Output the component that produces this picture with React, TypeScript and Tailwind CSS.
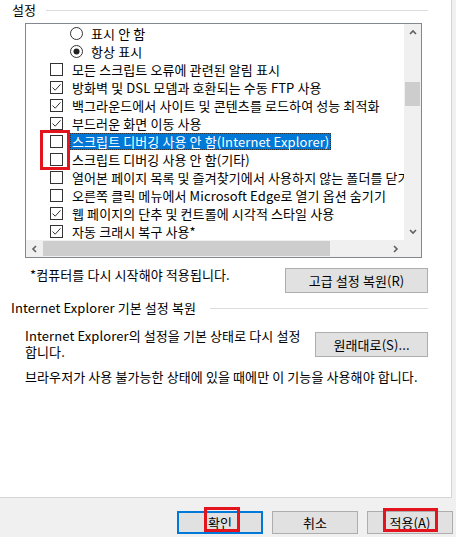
import React from "react";

type Item = { kind: "radio" | "check"; on: boolean; text: string; selected?: boolean };

const items: Item[] = [
  { kind: "radio", on: false, text: "표시 안 함" },
  { kind: "radio", on: true, text: "항상 표시" },
  { kind: "check", on: false, text: "모든 스크립트 오류에 관련된 알림 표시" },
  { kind: "check", on: true, text: "방화벽 및 DSL 모뎀과 호환되는 수동 FTP 사용" },
  { kind: "check", on: true, text: "백그라운드에서 사이트 및 콘텐츠를 로드하여 성능 최적화" },
  { kind: "check", on: true, text: "부드러운 화면 이동 사용" },
  { kind: "check", on: false, text: "스크립트 디버깅 사용 안 함(Internet Explorer)", selected: true },
  { kind: "check", on: false, text: "스크립트 디버깅 사용 안 함(기타)" },
  { kind: "check", on: false, text: "열어본 페이지 목록 및 즐겨찾기에서 사용하지 않는 폴더를 닫기" },
  { kind: "check", on: false, text: "오른쪽 클릭 메뉴에서 Microsoft Edge로 열기 옵션 숨기기" },
  { kind: "check", on: true, text: "웹 페이지의 단추 및 컨트롤에 시각적 스타일 사용" },
  { kind: "check", on: true, text: "자동 크래시 복구 사용*" },
];

function CheckBox({ on }: { on: boolean }) {
  return (
    <svg width="13" height="13" viewBox="0 0 13 13" className="shrink-0">
      <rect x="0.5" y="0.5" width="12" height="12" fill="#fff" stroke="#333" />
      {on && <path d="M2.5 6.5 L5.2 9.2 L10.5 3.3" fill="none" stroke="#333" strokeWidth="1" />}
    </svg>
  );
}

function Radio({ on }: { on: boolean }) {
  return (
    <svg width="13" height="13" viewBox="0 0 13 13" className="shrink-0">
      <circle cx="6.5" cy="6.5" r="6" fill="#fff" stroke="#333" />
      {on && <circle cx="6.5" cy="6.5" r="3" fill="#222" />}
    </svg>
  );
}

function Chevron({ dir }: { dir: "up" | "down" | "left" | "right" }) {
  const d = {
    up: "M1 5 L4 2 L7 5",
    down: "M1 2 L4 5 L7 2",
    left: "M5 1 L2 4 L5 7",
    right: "M2 1 L5 4 L2 7",
  }[dir];
  return (
    <svg width="8" height="8" viewBox="0 0 8 8">
      <path d={d} fill="none" stroke="#606060" strokeWidth="1.6" />
    </svg>
  );
}

function Row({ item }: { item: Item }) {
  return (
    <div
      className={
        "flex h-[18px] items-center whitespace-nowrap " +
        (item.kind === "radio" ? "pl-[44px] gap-[6px]" : "pl-[24px] gap-[7px]")
      }
    >
      {item.kind === "radio" ? <Radio on={item.on} /> : <CheckBox on={item.on} />}
      <span
        className={
          item.selected
            ? "bg-[#0078d7] text-white px-[2px] h-[17px] leading-[17px] outline outline-1 outline-dotted outline-[#333] -outline-offset-1"
            : "px-[2px] leading-[17px]"
        }
      >
        {item.text}
      </span>
    </div>
  );
}

function Btn({ children, w, h, primary }: { children: React.ReactNode; w: string; h: string; primary?: boolean }) {
  return (
    <div
      className={
        "flex items-center justify-center bg-[#e1e1e1] text-black leading-none " +
        w +
        " " +
        h +
        (primary ? " border-2 border-[#0078d7]" : " border border-[#adadad]")
      }
    >
      {children}
    </div>
  );
}

export default function App() {
  return (
    <div className="relative w-[456px] h-[537px] bg-[#f0f0f0] flex flex-col overflow-hidden text-[13px] tracking-[0.1px] text-black font-['Noto_Sans_CJK_KR','Noto_Sans',sans-serif]">
      <div className="w-[452px] h-[498px] bg-white border-r border-b border-[#d4d4d4] flex flex-col">
        {/* 설정 */}
        <div className="flex items-center w-[428px] h-[18px] mt-[1px] pl-[12px]">
          <span className="leading-[18px]">설정</span>
          <div className="flex-1 h-px bg-[#dcdcdc] ml-[10px]" />
        </div>

        {/* list box */}
        <div className="ml-[25px] mt-[4px] w-[397px] h-[235px] border border-[#828790] flex flex-col">
          <div className="flex h-[216px]">
            <div className="flex-1 overflow-hidden flex flex-col">
              {items.map((it, i) => (
                <Row key={i} item={it} />
              ))}
            </div>
            <div className="w-[17px] bg-[#f0f0f0] flex flex-col">
              <div className="h-[17px] flex items-center justify-center">
                <Chevron dir="up" />
              </div>
              <div className="flex-1 flex flex-col px-px">
                <div className="h-[41px]" />
                <div className="h-[24px] bg-[#cdcdcd]" />
              </div>
              <div className="h-[17px] flex items-center justify-center">
                <Chevron dir="down" />
              </div>
            </div>
          </div>
          <div className="flex h-[17px] bg-[#f0f0f0]">
            <div className="w-[17px] flex items-center justify-center">
              <Chevron dir="left" />
            </div>
            <div className="flex-1 flex items-center py-px">
              <div className="w-[287px] h-full bg-[#cdcdcd]" />
            </div>
            <div className="w-[17px] flex items-center justify-center">
              <Chevron dir="right" />
            </div>
            <div className="w-[17px] bg-[#f0f0f0]" />
          </div>
        </div>

        {/* restart note + reset advanced */}
        <div className="flex items-start justify-between w-[428px] pl-[30px] mt-[10px]">
          <span className="leading-[14px]">*컴퓨터를 다시 시작해야 적용됩니다.</span>
          <Btn w="w-[143px]" h="h-[25px]">고급 설정 복원(R)</Btn>
        </div>

        {/* IE reset group */}
        <div className="flex items-center w-[428px] h-[18px] mt-[6px] pl-[11px]">
          <span className="leading-[18px]">Internet Explorer 기본 설정 복원</span>
          <div className="flex-1 h-px bg-[#dcdcdc] ml-[14px]" />
        </div>

        <div className="flex items-start justify-between w-[428px] pl-[25px] mt-[11px]">
          <p className="leading-[16px]">
            Internet Explorer의 설정을 기본 상태로 다시 설정
            <br />
            합니다.
          </p>
          <div className="mt-[4px]">
            <Btn w="w-[113px]" h="h-[25px]">원래대로(S)...</Btn>
          </div>
        </div>

        <p className="pl-[25px] mt-[9px] leading-[15px] whitespace-nowrap">
          브라우저가 사용 불가능한 상태에 있을 때에만 이 기능을 사용해야 합니다.
        </p>
      </div>

      {/* dialog buttons */}
      <div className="flex justify-end items-start gap-[9px] pt-[13px] pr-[3px]">
        <Btn w="w-[86px]" h="h-[23px]" primary>
          확인
        </Btn>
        <Btn w="w-[86px]" h="h-[23px]">취소</Btn>
        <Btn w="w-[86px]" h="h-[23px]">적용(A)</Btn>
      </div>

      {/* red annotation boxes */}
      <div className="absolute left-[40px] top-[130px] w-[30px] h-[40px] border-[3px] border-[#e3141e]" />
      <div className="absolute left-[204px] top-[507px] w-[36px] h-[25px] border-[3px] border-[#e3141e]" />
      <div className="absolute left-[383px] top-[508px] w-[55px] h-[24px] border-[3px] border-[#e3141e]" />
    </div>
  );
}
